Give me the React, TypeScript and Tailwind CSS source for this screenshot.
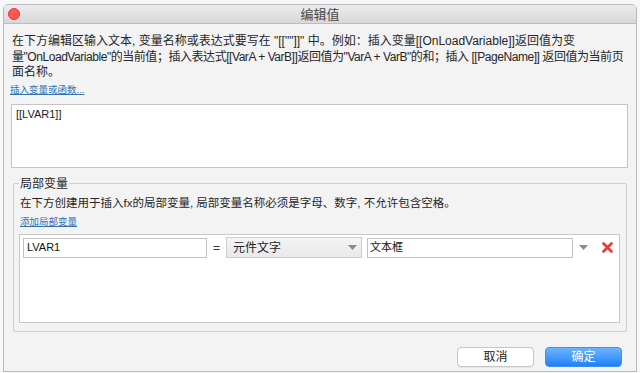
import React from "react";

const font = { fontFamily: '"Helvetica Neue", "Liberation Sans", "Noto Sans CJK SC", sans-serif' };

function Arrow() {
  return (
    <svg width="9" height="5" viewBox="0 0 9 5">
      <path d="M0 0 L9 0 L4.5 5 Z" fill="#8a8a8a" />
    </svg>
  );
}

export default function App() {
  return (
    <div
      className="w-[640px] h-[373px] bg-[#f7f7f7] pl-[3px] pt-[4px] overflow-hidden"
      style={font}
    >
      <div className="w-[634px] h-[368px] flex flex-col rounded-t-[5px] border border-[#b9b9b9] bg-[#f3f3f3] overflow-hidden text-[#222]">
        {/* Title bar */}
        <div className="relative h-[19px] shrink-0 flex items-center justify-center bg-gradient-to-b from-[#ececec] to-[#d8d8d8] border-b border-[#bdbdbd]">
          <div className="absolute left-[4px] top-[3px] w-[12px] h-[12px] rounded-full bg-[#fc5753] border border-[#df3d3a]" />
          <span className="text-[13px] text-[#4a4a4a] leading-none">编辑值</span>
        </div>

        <div className="flex flex-col pl-[7px] pr-[8px]">
          <div className="mt-[10px] pl-[1px] text-[12px] leading-[15.5px] text-[#262626]">
            <div className="whitespace-nowrap">在下方编辑区输入文本, 变量名称或表达式要写在 "[[""]]" 中。例如：插入变量[[OnLoadVariable]]返回值为变</div>
            <div className="whitespace-nowrap tracking-[-0.45px]">量"OnLoadVariable"的当前值；插入表达式[[VarA + VarB]]返回值为"VarA + VarB"的和；插入 [[PageName]] 返回值为当前页</div>
            <div className="whitespace-nowrap">面名称。</div>
          </div>

          <div className="mt-[3px] -ml-[1px] text-[9.5px] leading-[12px] text-[#2f74b5] underline">插入变量或函数...</div>

          <div className="mt-[8px] h-[64px] bg-white border border-[#c4c4c4] px-[4px] pt-[2px] text-[11px] leading-[14px] text-[#222]">
            [[LVAR1]]
          </div>

          <fieldset className="mt-[8px] ml-[2px] mr-[1px] border border-[#cfcfcf] rounded-[2px] pl-[6px] pr-[6px] pb-[8px]">
            <legend className="px-[1px] -ml-[1px] text-[12px] leading-[16px] text-[#262626]">局部变量</legend>
            <div className="mt-[3px] text-[11.5px] leading-[16px] text-[#262626] whitespace-nowrap">
              在下方创建用于插入fx的局部变量, 局部变量名称必须是字母、数字, 不允许包含空格。
            </div>
            <div className="mt-[5px] text-[9.5px] leading-[12px] text-[#2f74b5] underline">添加局部变量</div>
            <div className="mt-[6px] -ml-[1px] h-[89px] bg-white border border-[#c8c8c8] pl-[3px] pt-[3px]">
              <div className="flex items-center h-[20px]">
                <div className="w-[184px] h-[20px] border border-[#c2c2c2] bg-white flex items-center pl-[3px] text-[11px] text-[#111]">
                  LVAR1
                </div>
                <div className="w-[19px] text-center text-[12px] text-[#333]">=</div>
                <div className="w-[136px] h-[21px] border border-[#cdcdcd] bg-gradient-to-b from-[#f4f4f4] to-[#e9e9e9] flex items-center justify-between pl-[6px] pr-[4px] text-[12px] text-[#222]">
                  <span>元件文字</span>
                  <Arrow />
                </div>
                <div className="ml-[5px] w-[206px] h-[20px] border border-[#c2c2c2] bg-white flex items-center pl-[2px] text-[11px] text-[#111]">
                  文本框
                </div>
                <div className="ml-[5px] w-[10px] flex justify-center">
                  <Arrow />
                </div>
                <div className="ml-[14px]">
                  <svg width="11" height="11" viewBox="0 0 11 11">
                    <path d="M1.5 1.5 L9.5 9.5 M9.5 1.5 L1.5 9.5" stroke="#f0352b" strokeWidth="2.6" strokeLinecap="round" />
                  </svg>
                </div>
              </div>
            </div>
          </fieldset>

          <div className="mt-[15px] flex justify-end gap-[11px] pr-[6px]">
            <button className="w-[77px] h-[20px] rounded-[4px] border border-[#c6c6c6] bg-white text-[12px] text-[#222] leading-none shadow-[0_1px_0_rgba(0,0,0,0.05)]">
              取消
            </button>
            <button className="w-[77px] h-[20px] rounded-[4px] border border-[#3f8ff0] bg-gradient-to-b from-[#6cb4fb] to-[#1b80f9] text-[12px] text-white leading-none">
              确定
            </button>
          </div>
        </div>
      </div>
    </div>
  );
}
